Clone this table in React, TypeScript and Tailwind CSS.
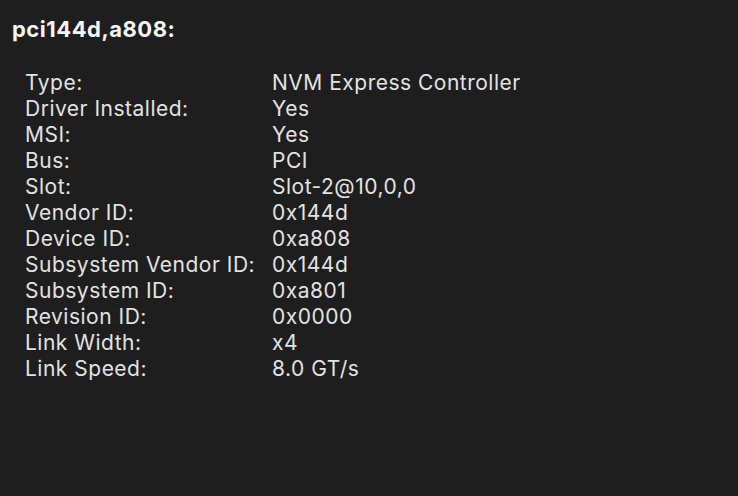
const rows: [string, string][] = [
  ["Type:", "NVM Express Controller"],
  ["Driver Installed:", "Yes"],
  ["MSI:", "Yes"],
  ["Bus:", "PCI"],
  ["Slot:", "Slot-2@10,0,0"],
  ["Vendor ID:", "0x144d"],
  ["Device ID:", "0xa808"],
  ["Subsystem Vendor ID:", "0x144d"],
  ["Subsystem ID:", "0xa801"],
  ["Revision ID:", "0x0000"],
  ["Link Width:", "x4"],
  ["Link Speed:", "8.0 GT/s"],
];

export default function App() {
  return (
    <div className="h-[496px] w-[738px] overflow-hidden bg-[#1e1e1e] pt-[16px] pl-[12px] font-['Inter',sans-serif] text-[21px] leading-[26px] tracking-[0.5px] text-[#e2e2e2] antialiased">
      <h1 className="text-[22px] font-bold text-[#f4f4f4]">pci144d,a808:</h1>

      <div className="mt-[28px] ml-[13px] grid grid-cols-[247px_1fr]">
        {rows.map(([label, value]) => (
          <div key={label} className="contents">
            <span>{label}</span>
            <span>{value}</span>
          </div>
        ))}
      </div>
    </div>
  );
}
